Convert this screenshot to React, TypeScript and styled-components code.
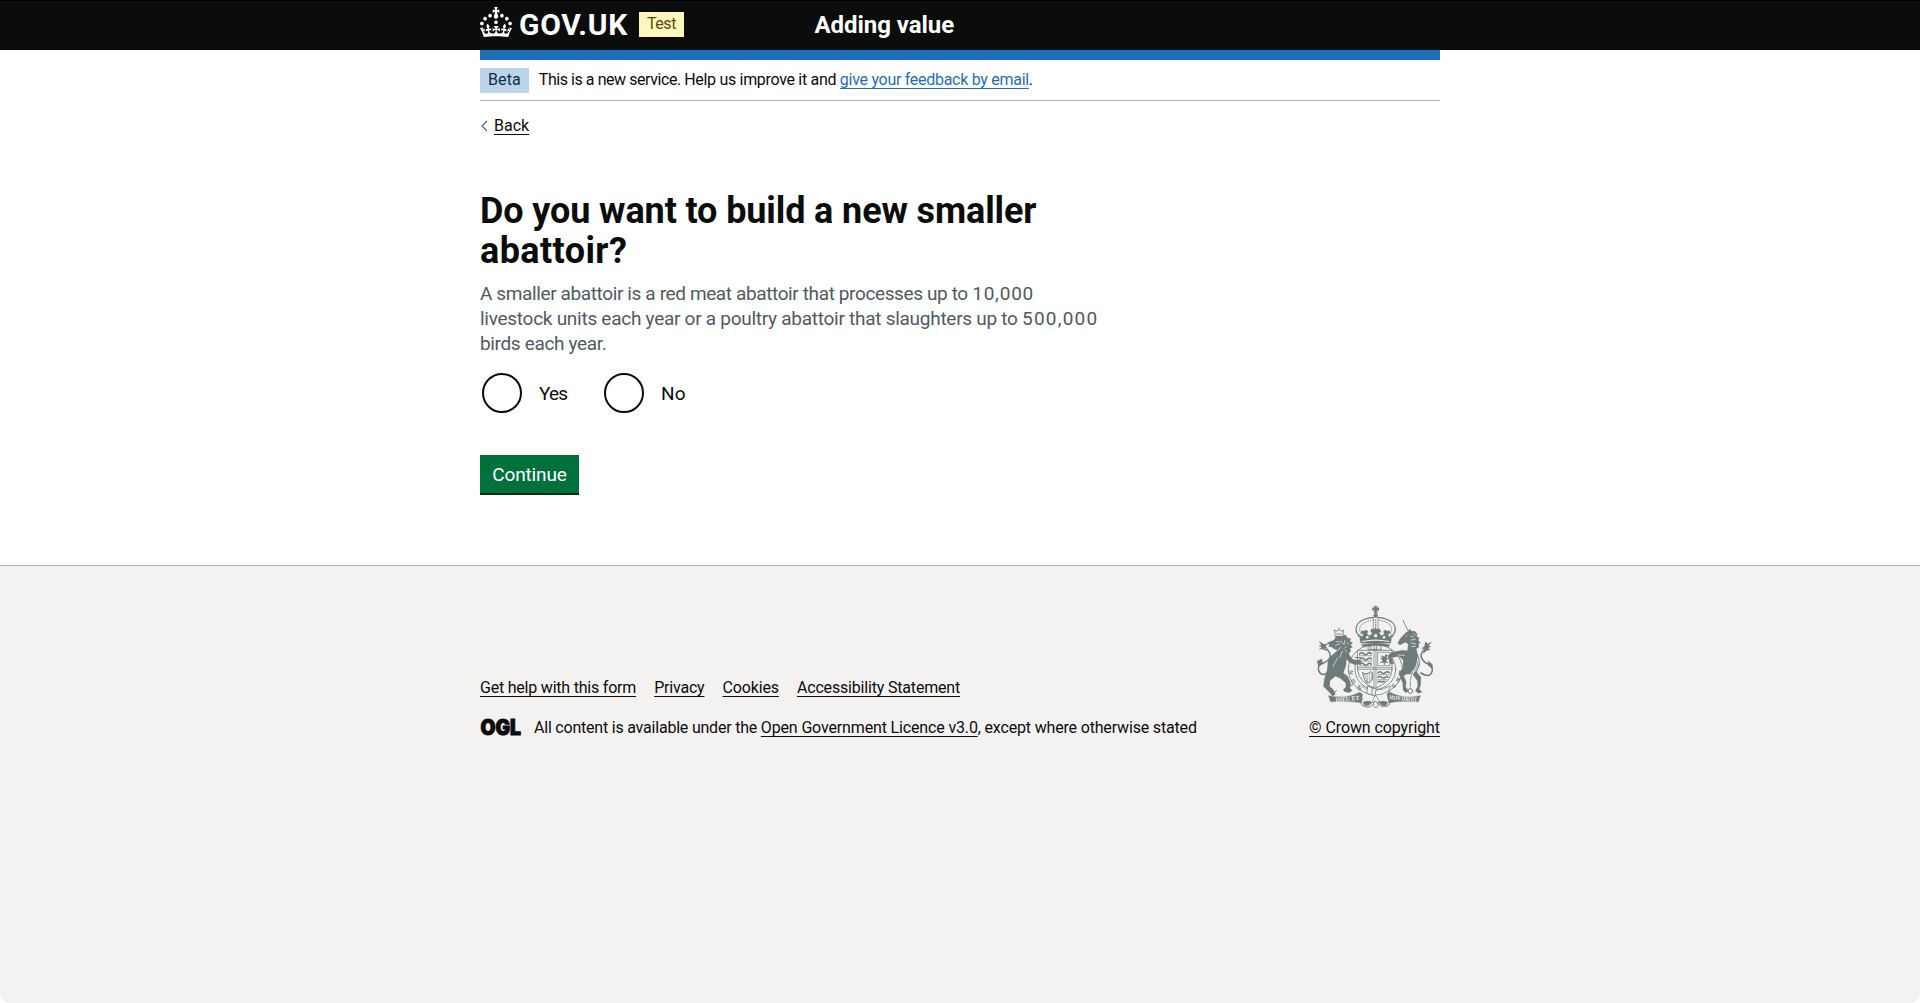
import React from "react";
import styled, { createGlobalStyle } from "styled-components";

const ink = "#0b0c0c";

const GlobalStyle = createGlobalStyle`
  *, *::before, *::after { box-sizing: border-box; }
  body {
    margin: 0;
    background: #fff;
    color: ${ink};
    font-family: Roboto, "Liberation Sans", sans-serif;
    font-size: 16px;
    line-height: 20px;
  }
`;

const Page = styled.div`
  min-height: 1003px;
  display: flex;
  flex-direction: column;
`;

const Container = styled.div`
  width: 960px;
  margin: 0 auto;
`;

const Header = styled.header`
  height: 50px;
  background: ${ink};
  border-top: 1px solid #000;
  color: #fff;
`;

const HeaderRow = styled(Container)`
  display: grid;
  grid-template-columns: 334.5px 1fr;
  align-items: center;
  height: 48px;
`;

const Brand = styled.div`
  display: flex;
  align-items: center;
`;

const Crown = styled.svg`
  width: 32px;
  height: 30px;
  margin-top: -6px;
  fill: #fff;
`;

const Wordmark = styled.span`
  width: 111px;
  margin-left: 7px;
  font-size: 30px;
  font-weight: 700;
  line-height: 30px;
  letter-spacing: 0.7px;
`;

const Tag = styled.strong<{ $tone: "yellow" | "blue"; $tracking?: number }>`
  height: 25px;
  padding: 0 8px 2px;
  font-weight: 400;
  line-height: 23px;
  letter-spacing: ${(p) => p.$tracking ?? 0}px;
  color: ${(p) => (p.$tone === "yellow" ? "#594d00" : "#0c2d4a")};
  background: ${(p) => (p.$tone === "yellow" ? "#fff7bf" : "#bbd4ea")};
`;

const BrandTag = styled(Tag)`
  margin: -1px 0 0 9px;
`;

const ServiceName = styled.span`
  font-size: 24px;
  font-weight: 700;
  line-height: 30px;
  letter-spacing: -0.05px;
`;

const BlueBar = styled(Container)`
  height: 10px;
  background: #1d70b8;
`;

const PhaseBanner = styled(Container)`
  display: flex;
  gap: 10px;
  padding: 8px 0 7px;
  border-bottom: 1px solid #b1b4b6;
`;

const Run = styled.span<{ $tracking: number }>`
  letter-spacing: ${(p) => p.$tracking}px;
  white-space: pre;
`;

const OptionText = styled(Run)`
  padding-top: 1px;
`;

const BannerText = styled.span`
  line-height: 23px;
`;

const Link = styled.a<{ $tracking?: number; $color?: string }>`
  color: ${(p) => p.$color ?? ink};
  letter-spacing: ${(p) => p.$tracking ?? 0}px;
  text-decoration: underline;
  text-decoration-thickness: 1px;
  text-underline-offset: 2.5px;
  white-space: nowrap;
`;

const BackRow = styled.div`
  display: flex;
  align-items: center;
  gap: 6px;
  margin-top: 15px;
  height: 20px;
`;

const Chevron = styled.svg`
  width: 8px;
  height: 12px;
  fill: none;
  stroke: #505a5f;
  stroke-width: 1.1;
`;

const Main = styled(Container)`
  padding-bottom: 72px;
`;

const Heading = styled.h1`
  margin: 55px 0 10px;
  font-size: 36px;
  font-weight: 700;
  line-height: 40px;
`;

const Line = styled.span<{ $tracking: number }>`
  display: block;
  letter-spacing: ${(p) => p.$tracking}px;
  white-space: nowrap;
`;

const Hint = styled.p`
  margin: 0 0 15px;
  color: #505a5f;
  font-size: 19px;
  line-height: 25px;
`;

const Radios = styled.div`
  display: flex;
`;

const RadioOption = styled.label`
  display: flex;
  align-items: center;
  width: 122px;
  height: 44px;
  padding-left: 2px;
  font-size: 19px;
`;

const RadioCircle = styled.span`
  width: 40px;
  height: 40px;
  margin-right: 17px;
  border: 2px solid ${ink};
  border-radius: 50%;
`;

const Button = styled.button`
  display: block;
  width: 99px;
  height: 38px;
  margin-top: 40px;
  padding: 1px 0 0;
  border: 0;
  background: #00703c;
  box-shadow: 0 2px 0 #002d18;
  color: #fff;
  font: inherit;
  font-size: 19px;
  letter-spacing: -0.15px;
`;

const Footer = styled.footer`
  flex: 1;
  border-top: 1px solid #b1b4b6;
  border-radius: 0 0 10px 10px;
  background: #f3f2f1;
`;

const FooterRow = styled(Container)`
  display: flex;
  justify-content: space-between;
  align-items: flex-end;
  padding-top: 38px;
`;

const FooterMeta = styled.div`
  display: flex;
  flex-direction: column;
  gap: 20px;
`;

const FooterLinks = styled.nav`
  display: flex;
  gap: 18px;
`;

const Licence = styled.div`
  display: flex;
  align-items: center;
  height: 20px;
`;

const OglLogo = styled.svg`
  width: 46px;
  height: 30px;
  margin: -6px 10px -4px -2px;
  overflow: visible;
  fill: ${ink};
  stroke: ${ink};
  stroke-width: 1;
  font: 900 21px Inter, sans-serif;
`;

const Copyright = styled.div`
  display: flex;
  flex-direction: column;
  align-items: center;
  gap: 8px;
`;

const CrestSvg = styled.svg`
  width: 118px;
  height: 106px;
  fill: #6f7a7c;
  stroke: #6f7a7c;
`;

function Crest() {
  const paper = "#f3f2f1";
  return (
    <CrestSvg viewBox="78 42 354 318" strokeLinejoin="round" strokeLinecap="round" aria-label="Royal coat of arms">
      {/* crown */}
      <g strokeWidth="0.5">
        <path d="M252 48h10l-2 7 7-3v10l-7-2 3 9h-12l3-9-7 2V52l7 3z" />
        <circle cx="257" cy="76" r="6" />
        <path d="M207 140C184 108 208 86 250 82q7-3 14 0c42 4 66 26 43 58" fill="none" strokeWidth="3.5" />
        <path d="M214 132C200 110 218 95 248 90M300 132C314 110 296 95 266 90" fill="none" strokeWidth="3" strokeDasharray="1 5" />
        <path d="M250 83v42M264 83v42" fill="none" strokeWidth="2" />
        <path d="M257 90v34" fill="none" strokeWidth="4" strokeDasharray="1 6" />
        <path d="M207 132l9 9 4-8-7-4 3-8 7 3 4-5 7 5-3 8 8 5 8-7-6-6 4-8 8 2 4-5 4 5 8-2 4 8-6 6 8 7 8-5-3-8 7-5 4 5 7-3 3 8-7 4 4 8 9-9-5 28H212z" />
        <path d="M214 164q43-10 86 0l-5 7q-38-8-76 0z" />
      </g>
      <g fill={paper} stroke="none">
        <circle cx="232" cy="142" r="4" />
        <circle cx="257" cy="137" r="5" />
        <circle cx="282" cy="142" r="4" />
        <path d="M216 153q41-9 82 0v3q-41-8-82 0z" />
      </g>
      {/* garter */}
      <ellipse cx="256" cy="238" rx="81" ry="75" fill="none" strokeWidth="2.5" />
      <ellipse cx="256" cy="238" rx="61" ry="60" fill="none" strokeWidth="2.5" />
      <g stroke="none" fontFamily="Liberation Sans, sans-serif" fontWeight="700" fontSize="17" textAnchor="middle">
        <text x="238" y="180">Q</text>
        <text x="256" y="179">U</text>
        <text x="272" y="180">I</text>
        <text transform="translate(188 248) rotate(-82)">N</text>
        <text transform="translate(195 272) rotate(-110)">O</text>
        <text transform="translate(211 291) rotate(-130)">H</text>
        <text transform="translate(327 246) rotate(98)">E</text>
        <text transform="translate(319 267) rotate(110)">N</text>
        <text transform="translate(306 284) rotate(130)">S</text>
        <text transform="translate(290 299) rotate(150)">E</text>
      </g>
      {/* shield */}
      <path d="M203 181H306V240Q304 276 256 295Q206 278 203 240Z" fill={paper} strokeWidth="2.5" />
      <path d="M252 181v112M258 181v112M203 233h103M203 238h103" fill="none" strokeWidth="2" />
      <g fill="none" strokeWidth="4.5">
        <path d="M209 191q7-6 12 0t11 0 12 0M210 207q7-6 12 0t11 0 11 0M210 223q7-6 12 0t11 0 11 0" />
        <path d="M208 197h37M208 213h37M208 228h37" strokeWidth="2" strokeDasharray="5 3" />
        <path d="M264 248q6-5 11 0t11 0 12 0M264 262q6-5 11 0t11 0 8 0M264 276q6-5 11 0l8-2" />
        <path d="M264 254h34M264 269h26" strokeWidth="2" strokeDasharray="5 3" />
      </g>
      <path d="M264 187h36v40h-36z" fill="none" strokeWidth="2" />
      <path d="M271 218l8-7-7-6 6-1-1-7 6 4 5-8 4 4-4 6 7 3-8 4 7 9-8-3-3 8-3-8zM272 197l6 7" strokeWidth="1.5" />
      <path d="M218 248q9 9 24-3l6 4q4 23-14 31-13-6-16-32z" fill="none" strokeWidth="3" />
      <path d="M224 253l6 21M231 252l2 25M238 250v25M244 248v21" fill="none" strokeWidth="1.5" />
      {/* lion */}
      <g strokeWidth="0.5">
        <path d="M135 130l-2-10 8 4 6-6 6 6 8-4-2 10 3 9h-26zM147 114v5M139 132h16" fill="none" strokeWidth="2.5" />
        <path d="M132 150l7-12 18 1 9-5 7 10 10 2-4 8 9 4-6 7 6 7-8 3 2 8-6 9 10 14 10 5 13-2 6 6-6 8-15 1-14-6-11-10-1 18-8 23 13 10 9 20-2 16 7 6-9 7-14-3-5-6 9-8-1-12-16-14-15-6-16 13-1 17 13 12 4 13-9 4-12-14-15-15 4-26 7-21 2-17q-2-20 15-31l20-18-8 4-9-4-6-5-9-1 2-7-8-4z" />
        <path d="M188 284l-12 6M139 302l-8 9M197 210l15 9M195 202l17 1" fill="none" strokeWidth="3" />
        <path d="M116 247q-21 15-30-5-6-17 17-24 30-16 10-38l-16-4" fill="none" strokeWidth="4.5" />
        <path d="M87 154l14 8 14 1-9 5 7 8-14-2-13 6 9-9-8-3 7-3zM81 214l14-8 3 12-12 12z" />
      </g>
      <path d="M139 155l10 1M137 166l12-4M153 153l7 10M165 151l-3 13M170 168l-7 7M129 229l14-25M157 184l-7 18M172 158l5 5M152 170l-5 8M166 180l4 6" fill="none" stroke={paper} strokeWidth="2" />
      {/* unicorn */}
      <g strokeWidth="0.5">
        <path d="M339 91l16 33" fill="none" strokeWidth="2.5" />
        <path d="M330 146l17-18 9-5 2-7 6 7 11 1 7 8-2 7 8 5-3 7 6 7-6 4 2 9-8 5 3 15 8 16-1 19-9 20 13 16-1 23-4 12 8 10-11 3-9-7 7-14-1-17-15-20-18 1-8 5 8 17-2 16 10 13-10 4-8-8-1-21-12-28 12-16 2-25-14-11-22 4 7 19-11-1-7-24 12-10 31-6 16 1 3-19-9-6-16 8-7-5z" />
        <path d="M392 249q28 17 34-4 5-18-17-25-25-18-10-37l14-9" fill="none" strokeWidth="4.5" />
        <path d="M426 155l-13 6-7-6-2 12-9 9 9 1-4 14 9-9 12-3-7-4 9-6-8-2zM428 224l-13-12-1 14 12 10z" />
        <path d="M386 203q-4 34-15 41t-10 52" fill="none" stroke={paper} strokeWidth="7" />
        <path d="M386 203q-4 34-15 41t-10 52" fill="none" strokeWidth="3" strokeDasharray="3 4" />
        <circle cx="361" cy="303" r="7" fill={paper} strokeWidth="3" />
      </g>
      <path d="M362 138l9 4M363 150l13-2M363 159l14 3M366 170l10-1M324 195l20 1M371 130l5 6" fill="none" stroke={paper} strokeWidth="2" />
      <circle cx="349" cy="138" r="1.5" fill={paper} stroke="none" />
      {/* buckle and mottoes */}
      <path d="M207 285q44 30 94 3l-6 16q-38 23-79 0z" fill={paper} strokeWidth="2" />
      <path d="M234 289l25 9-5 20-23-8zM246 293v22" fill={paper} strokeWidth="2.5" />
      <path d="M116 317q52 12 93-10l9 6-5 25q-42-6-91-3z" />
      <path d="M391 317q-50 12-91-10l-9 6 5 25q42-6 89-3z" />
      <path d="M218 326q-14 18 8 24 13 5 24-9 5-15 13 0 12 12 27 8 16-6 6-24" fill="none" strokeWidth="3" />
      <path d="M219 337q15-8 28 0-10 13-24 9zM293 337q-15-8-28 0 10 13 24 9z" />
      <path d="M256 316l-8 14 5 22h9l4-21z" fill="none" strokeWidth="2" />
      <g fill={paper} stroke="none" fontFamily="Liberation Serif, serif" fontWeight="700" fontSize="19">
        <text transform="translate(137 336) rotate(-5)" textLength="72" lengthAdjust="spacingAndGlyphs">DIEU ET</text>
        <text transform="translate(297 328) rotate(5)" textLength="84" lengthAdjust="spacingAndGlyphs">MON DROIT</text>
      </g>
    </CrestSvg>
  );
}

export default function App() {
  return (
    <Page>
      <GlobalStyle />
      <Header>
        <HeaderRow>
          <Brand>
            <Crown viewBox="0 0 32 30" aria-hidden="true">
              <path d="M22.6 10.4c-1 .4-2-.1-2.4-1-.4-.9.1-2 1-2.4.9-.4 2 .1 2.4 1s-.1 2-1 2.4m-5.9 6.7c-.9.4-2-.1-2.4-1-.4-.9.1-2 1-2.4.9-.4 2 .1 2.4 1s-.1 2-1 2.4m10.8-3.7c-1 .4-2-.1-2.4-1-.4-.9.1-2 1-2.4.9-.4 2 .1 2.4 1s0 2-1 2.4m3.3 4.8c-1 .4-2-.1-2.4-1-.4-.9.1-2 1-2.4.9-.4 2 .1 2.4 1s-.1 2-1 2.4M17 4.7l2.3 1.2V2.5l-2.3.7-.2-.2.9-3h-3.4l.9 3-.2.2c-.1.1-2.3-.7-2.3-.7v3.4L15 4.7c.1.1.1.2.2.2l-1.3 4c-.1.2-.1.4-.1.6 0 1.1.8 2 1.9 2.2h.7c1-.2 1.9-1.1 1.9-2.1 0-.2 0-.4-.1-.6l-1.3-4c-.1-.2 0-.2.1-.3m-7.6 5.7c.9.4 2-.1 2.4-1 .4-.9-.1-2-1-2.4-.9-.4-2 .1-2.4 1s0 2 1 2.4m-5 3c.9.4 2-.1 2.4-1 .4-.9-.1-2-1-2.4-.9-.4-2 .1-2.4 1s.1 2 1 2.4m-3.2 4.8c.9.4 2-.1 2.4-1 .4-.9-.1-2-1-2.4-.9-.4-2 .1-2.4 1s0 2 1 2.4m14.8 11c4.4 0 8.6.3 12.3.8 1.1-4.5 2.4-7 3.7-8.8l-2.5-.9c.2 1.3.3 1.9 0 2.7-.4-.4-.8-1.1-1.1-2.3l-1.2 4c.7-.5 1.3-.8 2-.9-1.1 2.5-2.6 3.1-3.5 3-1.1-.2-1.7-1.2-1.5-2.1.3-1.2 1.5-1.5 2.1-.1 1.1-2.3-.8-3-2-2.3 1.9-1.9 2.1-3.5.6-5.6-2.1 1.6-2.1 3.2-1.2 5.5-1.2-1.4-3.2-.6-2.5 1.6.9-1.4 2.1-.5 1.9.8-.2 1.1-1.7 2.1-3.5 1.9-2.7-.2-2.9-2.1-2.9-3.6.7-.1 1.9.5 2.9 1.9l.4-4.3c-1.1 1.1-2.1 1.4-3.2 1.4.4-1.2 2.1-3 2.1-3h-5.4s1.7 1.9 2.1 3c-1.1 0-2.1-.2-3.2-1.4l.4 4.3c1-1.4 2.2-2 2.9-1.9-.1 1.5-.2 3.4-2.9 3.6-1.9.2-3.4-.8-3.5-1.9-.2-1.3 1-2.2 1.9-.8.7-2.3-1.2-3-2.5-1.6.9-2.2.9-3.9-1.2-5.5-1.5 2-1.3 3.7.6 5.6-1.2-.7-3.1 0-2 2.3.6-1.4 1.8-1.1 2.1.1.2.9-.3 1.9-1.5 2.1-.9.2-2.4-.5-3.5-3 .6 0 1.2.3 2 .9l-1.2-4c-.3 1.1-.7 1.9-1.1 2.3-.3-.8-.2-1.4 0-2.7l-2.9.9C1.3 23 2.6 25.5 3.7 30c3.7-.5 7.9-.8 12.3-.8" />
            </Crown>
            <Wordmark>GOV.UK</Wordmark>
            <BrandTag $tone="yellow" $tracking={-0.45}>Test</BrandTag>
          </Brand>
          <ServiceName>Adding value</ServiceName>
        </HeaderRow>
      </Header>
      <BlueBar />
      <PhaseBanner>
        <Tag $tone="blue" $tracking={0.1}>Beta</Tag>
        <BannerText>
          <Run $tracking={-0.44}>This is a new service. </Run>
          <Run $tracking={-0.31}>{"Help us improve it and "}</Run>
          <Link $color="#1d70b8" $tracking={-0.285}>give your feedback by email</Link>.
        </BannerText>
      </PhaseBanner>
      <Main as="main">
        <BackRow>
          <Chevron viewBox="0 0 8 12"><path d="M7 1L2 6l5 5" /></Chevron>
          <Link>Back</Link>
        </BackRow>
        <Heading>
          <Line $tracking={-0.12}>Do you want to build a new smaller</Line>
          <Line $tracking={0.4}>abattoir?</Line>
        </Heading>
        <Hint>
          <Line $tracking={-0.38}>
            A smaller abattoir is a red meat abattoir that processes up to <Run $tracking={0.8}>10,000</Run>
          </Line>
          <Line $tracking={-0.27}>
            livestock units each year or a poultry abattoir that slaughters up to <Run $tracking={1.2}>500,000</Run>
          </Line>
          <Line $tracking={-0.35}>birds each year.</Line>
        </Hint>
        <Radios>
          <RadioOption><RadioCircle /><OptionText $tracking={-0.8}>Yes</OptionText></RadioOption>
          <RadioOption><RadioCircle /><OptionText $tracking={0.3}>No</OptionText></RadioOption>
        </Radios>
        <Button>Continue</Button>
      </Main>
      <Footer>
        <FooterRow>
          <FooterMeta>
            <FooterLinks>
              <Link $tracking={-0.21}>Get help with this form</Link>
              <Link $tracking={-0.2}>Privacy</Link>
              <Link $tracking={-0.13}>Cookies</Link>
              <Link $tracking={-0.18}>Accessibility Statement</Link>
            </FooterLinks>
            <Licence>
              <OglLogo viewBox="0 0 46 30"><text x="2.5" y="22.5" textLength="40.5" lengthAdjust="spacingAndGlyphs">OGL</text></OglLogo>
              <span>
                <Run $tracking={-0.21}>{"All content is available under the "}</Run>
                <Link $tracking={-0.15}>Open Government Licence v3.0</Link>
                <Run $tracking={-0.17}>, except where otherwise stated</Run>
              </span>
            </Licence>
          </FooterMeta>
          <Copyright>
            <Crest />
            <Link $tracking={-0.09}>© Crown copyright</Link>
          </Copyright>
        </FooterRow>
      </Footer>
    </Page>
  );
}
